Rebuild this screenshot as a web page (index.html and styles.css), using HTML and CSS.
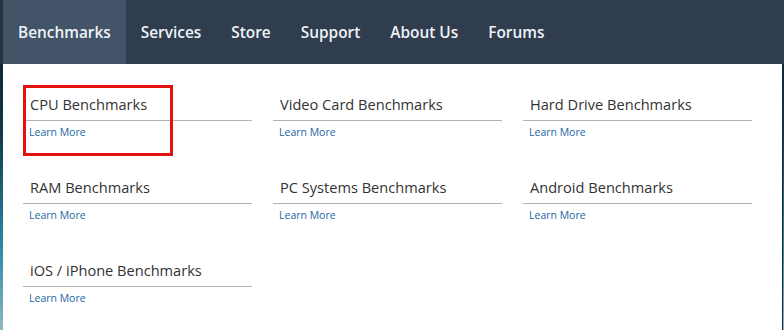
FILE: index.html
```html
<!DOCTYPE html>
<html lang="en">
<head>
    <meta charset="UTF-8">
    <meta name="viewport" content="width=device-width, initial-scale=1.0">
    <title>Benchmarks</title>
    <link rel="stylesheet" href="styles.css">
</head>
<body>
    <div class="nav">
        <a class="nav-item active" href="#">Benchmarks</a>
        <a class="nav-item" href="#">Services</a>
        <a class="nav-item" href="#">Store</a>
        <a class="nav-item" href="#">Support</a>
        <a class="nav-item" href="#">About Us</a>
        <a class="nav-item" href="#">Forums</a>
    </div>

    <div class="dropdown">
        <div class="highlight"></div>
        <div class="grid">
            <div class="item">
                <div class="title">CPU Benchmarks</div>
                <a class="more" href="#">Learn More</a>
            </div>
            <div class="item">
                <div class="title">Video Card Benchmarks</div>
                <a class="more" href="#">Learn More</a>
            </div>
            <div class="item">
                <div class="title">Hard Drive Benchmarks</div>
                <a class="more" href="#">Learn More</a>
            </div>
            <div class="item">
                <div class="title">RAM Benchmarks</div>
                <a class="more" href="#">Learn More</a>
            </div>
            <div class="item">
                <div class="title">PC Systems Benchmarks</div>
                <a class="more" href="#">Learn More</a>
            </div>
            <div class="item">
                <div class="title">Android Benchmarks</div>
                <a class="more" href="#">Learn More</a>
            </div>
            <div class="item">
                <div class="title">iOS / iPhone Benchmarks</div>
                <a class="more" href="#">Learn More</a>
            </div>
        </div>
    </div>
</body>
</html>
```

FILE: styles.css
```css
body {
    margin: 0;
    font-family: "Open Sans", sans-serif;
    background: linear-gradient(180deg, #0d1a24 0%, #123848 40%, #2a8aa6 75%, #8fb8c4 100%);
    height: 330px;
    overflow: hidden;
}
.nav {
    display: flex;
    height: 64px;
    padding-left: 3px;
    background: linear-gradient(90deg, #27323f 0, #27323f 3px, #2f3d4f 3px);
}
.nav-item {
    display: flex;
    align-items: center;
    padding: 0 15px;
    color: #eef2f6;
    font-size: 15.4px;
    font-weight: 600;
    text-decoration: none;
}
.nav-item.active {
    background: #435469;
}
.dropdown {
    position: relative;
    margin-left: 3px;
    width: 780px;
    height: 266px;
    background: white;
    border-right: 1px solid #1e2833;
    box-sizing: border-box;
    padding: 30px 0 0 20px;
}
.grid {
    display: grid;
    grid-template-columns: repeat(3, 229px);
    column-gap: 21px;
    row-gap: 38px;
}
.title {
    font-size: 14.6px;
    line-height: 20px;
    color: #333;
    padding: 0 0 6px 7px;
    border-bottom: 1px solid #b3b3b3;
}
.more {
    display: block;
    margin-top: 4px;
    padding-left: 6px;
    font-size: 10.5px;
    line-height: 14px;
    color: #2466a6;
    text-decoration: none;
}
.highlight {
    position: absolute;
    left: 20px;
    top: 21px;
    width: 144px;
    height: 65px;
    border: 3px solid #e3120f;
}
```
